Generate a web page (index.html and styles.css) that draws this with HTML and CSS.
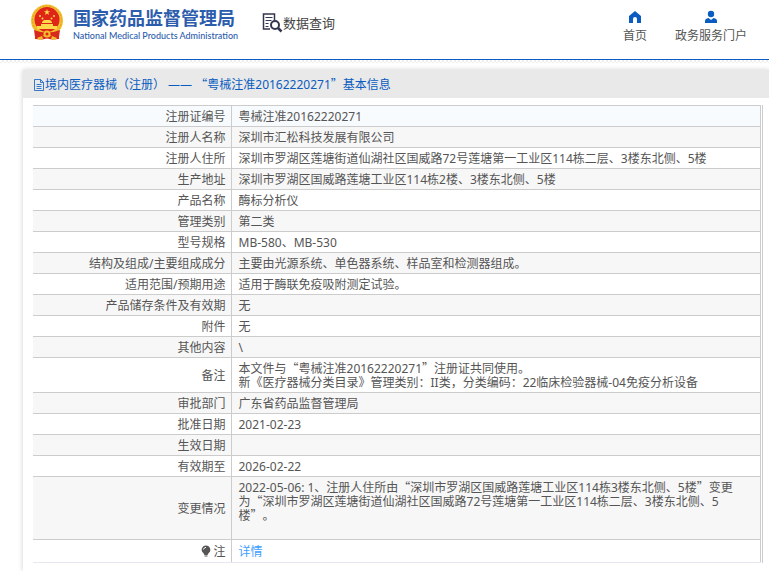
FILE: index.html
```html
<!DOCTYPE html>
<html lang="zh-CN">
<head>
    <meta charset="UTF-8">
    <meta name="viewport" content="width=device-width, initial-scale=1.0">
    <title>国家药品监督管理局 数据查询</title>
    <link rel="stylesheet" href="styles.css">
</head>
<body>
    <header class="header">
        <a class="logo" href="#">
            <svg class="emblem" viewBox="0 0 34 36" aria-hidden="true">
                <path d="M5 26h24l0 9-7 .5-5-1-5 1-7-.5z" fill="#d8281c"/>
                <circle cx="17" cy="16.500" r="16" fill="#f3bd2e"/>
                <circle cx="17" cy="16.500" r="14.500" fill="none" stroke="#e0a41f" stroke-dasharray="2 1.500"/>
                <circle cx="17" cy="15.500" r="12.500" fill="#df2418"/>
                <path d="M17 5l.8 2.200h2.400l-1.900 1.400.7 2.300-2-1.400-2 1.400.7-2.300-1.900-1.400h2.400z" fill="#fbd94a"/>
                <g fill="#fbd94a">
                    <circle cx="10" cy="12" r="1"/>
                    <circle cx="12.500" cy="14.500" r="1"/>
                    <circle cx="21.500" cy="14.500" r="1"/>
                    <circle cx="24" cy="12" r="1"/>
                    <path d="M12 18l2-2h6l2 2v1H12zM11 20h12v2h4v3H7v-3h4z"/>
                </g>
                <path d="M4 26q13 5 26 0l-1 7-7-1-5-2-5 2-7 1z" fill="#d8281c"/>
                <circle cx="17" cy="30" r="3.500" fill="#f3bd2e"/>
                <circle cx="17" cy="30" r="1.500" fill="#df2418"/>
                <path d="M7 34l5-2 1 3-4 1zM27 34l-5-2-1 3 4 1z" fill="#f3bd2e"/>
            </svg>
            <span class="logo-text">
                <strong class="logo-cn">国家药品监督管理局</strong>
                <span class="logo-en">National Medical Products Administration</span>
            </span>
        </a>
        <a class="search-title" href="#">
            <svg class="search-icon" viewBox="0 0 21 20" aria-hidden="true">
                <path d="M8 16H1.500V1H12.500V7" fill="none" stroke="#34364f" stroke-width="1.500"/>
                <path d="M3.500 4.500h7M3.500 7.500h6M3.500 10.500h3M3.500 13.500h3" stroke="#34364f"/>
                <circle cx="13" cy="12" r="4" fill="#fff" stroke="#34364f" stroke-width="2"/>
                <path d="M16 15l3.500 3.500" stroke="#34364f" stroke-width="2.500"/>
            </svg>
            <span>数据查询</span>
        </a>
        <nav class="nav">
            <a class="nav-item" href="#">
                <svg class="nav-icon" viewBox="0 0 14 14" aria-hidden="true">
                    <path d="M7 1l6 5v7H9V9a2 2 0 0 0-4 0v4H1V6z" fill="#0a5cc0"/>
                </svg>
                <span>首页</span>
            </a>
            <a class="nav-item" href="#">
                <svg class="nav-icon" viewBox="0 0 14 14" aria-hidden="true">
                    <circle cx="7" cy="4" r="3.200" fill="#0a5cc0"/>
                    <path d="M1 13v-2q0-2.500 3.500-3L7 10l2.500-2q3.500.5 3.500 3v2z" fill="#0a5cc0"/>
                </svg>
                <span>政务服务门户</span>
            </a>
        </nav>
    </header>
    <div class="dots"></div>

    <main class="card">
        <h1 class="card-title">
            <svg class="doc-icon" viewBox="0 0 11 12" aria-hidden="true">
                <path d="M.5.500h6l3 3v8h-9zM6.500.500v3h3M2.500 5.500h5M2.500 7.500h5M2.500 9.500h5" fill="none" stroke="#0a5cc0" stroke-opacity=".8"/>
            </svg>
            <span>境内医疗器械（注册） —— <span class="q">“</span>粤械注准20162220271<span class="q">”</span>基本信息</span>
        </h1>
        <div class="table-wrap">
            <table class="info">
                <tbody>
                    <tr class="current"><th scope="row">注册证编号</th><td>粤械注准20162220271</td></tr>
                    <tr><th scope="row">注册人名称</th><td>深圳市汇松科技发展有限公司</td></tr>
                    <tr><th scope="row">注册人住所</th><td>深圳市罗湖区莲塘街道仙湖社区国威路72号莲塘第一工业区114栋二层、3楼东北侧、5楼</td></tr>
                    <tr><th scope="row">生产地址</th><td>深圳市罗湖区国威路莲塘工业区114栋2楼、3楼东北侧、5楼</td></tr>
                    <tr><th scope="row">产品名称</th><td>酶标分析仪</td></tr>
                    <tr><th scope="row">管理类别</th><td>第二类</td></tr>
                    <tr><th scope="row">型号规格</th><td>MB-580、MB-530</td></tr>
                    <tr><th scope="row">结构及组成/主要组成成分</th><td>主要由光源系统、单色器系统、样品室和检测器组成。</td></tr>
                    <tr><th scope="row">适用范围/预期用途</th><td>适用于酶联免疫吸附测定试验。</td></tr>
                    <tr><th scope="row">产品储存条件及有效期</th><td>无</td></tr>
                    <tr><th scope="row">附件</th><td>无</td></tr>
                    <tr><th scope="row">其他内容</th><td>\</td></tr>
                    <tr><th scope="row">备注</th><td>本文件与<span class="q">“</span>粤械注准20162220271<span class="q">”</span>注册证共同使用。<br>新《医疗器械分类目录》管理类别：II类，分类编码：22临床检验器械-04免疫分析设备</td></tr>
                    <tr><th scope="row">审批部门</th><td>广东省药品监督管理局</td></tr>
                    <tr><th scope="row">批准日期</th><td>2021-02-23</td></tr>
                    <tr><th scope="row">生效日期</th><td></td></tr>
                    <tr><th scope="row">有效期至</th><td>2026-02-22</td></tr>
                    <tr><th scope="row">变更情况</th><td class="changes">2022-05-06: 1、注册人住所由<span class="q">“</span>深圳市罗湖区国威路莲塘工业区114栋3楼东北侧、5楼<span class="q">”</span>变更为<span class="q">“</span>深圳市罗湖区莲塘街道仙湖社区国威路72号莲塘第一工业区114栋二层、3楼东北侧、5楼<span class="q">”</span>。</td></tr>
                    <tr class="note">
                        <th scope="row"><svg class="bulb" viewBox="0 0 10 12" aria-hidden="true">
                            <path d="M5 .5a4.300 4.300 0 0 1 2.500 7.800L6.500 10h-3L2.500 8.300A4.300 4.300 0 0 1 5 .5zM3.500 10.500h3v1h-3z" fill="#555"/>
                            <path d="M2.500 4.500Q3 2.500 5 2.300" fill="none" stroke="#fff"/>
                        </svg>注</th>
                        <td><a class="detail" href="#">详情</a></td>
                    </tr>
                </tbody>
            </table>
        </div>
    </main>
</body>
</html>
```
FILE: styles.css
```css
* {
    box-sizing: border-box;
}
body {
    margin: 0;
    font-family: "Noto Sans", "Noto Sans CJK SC", sans-serif;
    font-size: 12px;
    line-height: 14px;
    text-spacing-trim: space-all;
    color: #555;
    background: #fff;
}
a {
    color: inherit;
    text-decoration: none;
}
.header {
    display: flex;
    align-items: flex-start;
    height: 60px;
    padding: 4px 22px 0 30px;
    border-bottom: 1px solid #0a5cc0;
}
.dots {
    height: 3px;
    background: repeating-conic-gradient(#eee 0 25%, #fff 0 50%) 0 0 / 4px 4px;
}
.logo {
    display: flex;
    gap: 9px;
    color: #2c5cac;
}
.emblem {
    width: 34px;
    height: 36px;
}
.logo-text {
    display: flex;
    flex-direction: column;
    padding-top: 2px;
    white-space: nowrap;
}
.logo-cn {
    font-size: 18px;
    line-height: 24px;
}
.logo-en {
    font-family: Lato, sans-serif;
    font-size: 9px;
    font-weight: 500;
    line-height: 12px;
}
.search-title {
    display: flex;
    align-items: center;
    margin: 8px 0 0 24px;
    font-size: 13px;
    line-height: 22px;
    color: #444;
}
.search-icon {
    width: 21px;
    height: 20px;
}
.nav {
    display: flex;
    gap: 28px;
    margin: 6px 0 0 auto;
}
.nav-item {
    display: flex;
    flex-direction: column;
    align-items: center;
    gap: 4px;
    line-height: 16px;
}
.nav-icon {
    width: 14px;
    height: 14px;
}
.card {
    margin: 7px 0 0 23px;
    padding-bottom: 8px;
    background: #fff;
    box-shadow: 0 0 5px rgba(0, 0, 0, 0.2);
}
.card-title {
    display: flex;
    align-items: center;
    margin: 0;
    padding: 1px 11px 0;
    font-size: 12px;
    font-weight: normal;
    line-height: 27px;
    color: #0a5cc0;
    background: #e9e9e9;
}
.doc-icon {
    width: 11px;
    height: 12px;
}
/* full-width quotation marks */
.q {
    font-family: "Noto Sans CJK SC", sans-serif;
    line-height: 12px;
}
.table-wrap {
    margin: 7px 6px 0 10px;
    border-right: 1px solid #ccc;
    padding-right: 1px;
}
.info {
    width: 100%;
    border-collapse: collapse;
}
.info th,
.info td {
    height: 21px;
    padding: 4px 5px 2px 7px;
    border: 1px solid #ccc;
    font-weight: normal;
}
.info th {
    width: 198px;
    border-left: none;
    text-align: right;
}
.info tr:nth-child(even) {
    background: #f7f7f7;
}
.info .current {
    background: #f8fbfe;
}
.info .changes {
    height: 63px;
    padding-right: 20px;
    padding-bottom: 16px;
}
.info .note th,
.info .note td {
    height: 23px;
    border-bottom-color: #e6e8f0;
}
.bulb {
    width: 10px;
    height: 12px;
    margin-right: 2px;
    vertical-align: -1px;
}
.detail {
    color: #409eff;
}
```
